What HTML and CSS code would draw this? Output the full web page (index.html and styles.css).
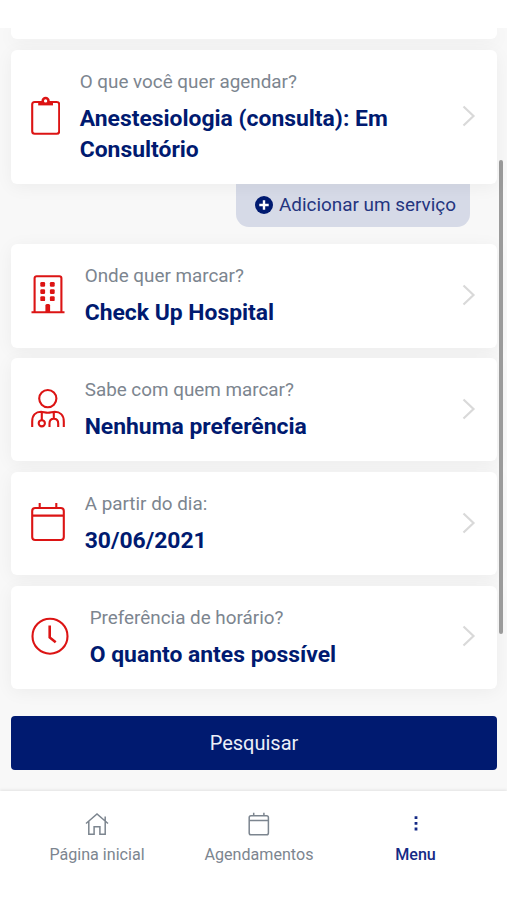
FILE: index.html
```html
<!DOCTYPE html>
<html lang="pt-BR">
<head>
<meta charset="utf-8">
<meta name="viewport" content="width=device-width, initial-scale=1">
<title>Agendamento</title>
<link rel="stylesheet" href="styles.css">
</head>
<body>
<div class="app">
  <main class="content">
    <div class="card card-cut"></div>

    <section class="card card-service">
      <svg class="icon" width="29" height="40" viewBox="0 0 29 40"><rect x="1.200" y="6" width="27" height="31.800" rx="2.500"/><path class="fill" d="M7.200 5.200H22v4.200H7.200z"/><circle class="clip" cx="14.600" cy="4.900" r="2.900"/></svg>
      <div class="text">
        <p class="label">O que você quer agendar?</p>
        <h2 class="value">Anestesiologia (consulta): Em Consultório</h2>
      </div>
      <svg class="chevron" width="14" height="22" viewBox="0 0 14 22"><path d="M1.500 1.500 11.500 11l-10 9.500"/></svg>
    </section>

    <div class="add-service">
      <svg width="18" height="18" viewBox="0 0 18 18"><circle cx="9" cy="9" r="9"/><path d="M9 4.300v9.400M4.300 9h9.400"/></svg>
      <span>Adicionar um serviço</span>
    </div>

    <section class="card">
      <svg class="icon" width="34" height="40" viewBox="0 0 34 40"><path d="M3.600 38V4.200a2 2 0 0 1 2-2h22.800a2 2 0 0 1 2 2V38M.5 38.300h33"/><g class="fill"><rect x="9.300" y="8" width="4.800" height="4.800" rx="1.200"/><rect x="18.900" y="8" width="4.800" height="4.800" rx="1.200"/><rect x="9.300" y="15.200" width="4.800" height="4.800" rx="1.200"/><rect x="18.900" y="15.200" width="4.800" height="4.800" rx="1.200"/><rect x="9.300" y="22.300" width="4.800" height="4.800" rx="1.200"/><rect x="18.900" y="22.300" width="4.800" height="4.800" rx="1.200"/><path d="M14.400 38v-6.500a1.500 1.500 0 0 1 1.500-1.500h1.700a1.500 1.500 0 0 1 1.500 1.500V38z"/></g></svg>
      <div class="text">
        <p class="label">Onde quer marcar?</p>
        <h2 class="value">Check Up Hospital</h2>
      </div>
      <svg class="chevron" width="14" height="22" viewBox="0 0 14 22"><path d="M1.500 1.500 11.500 11l-10 9.500"/></svg>
    </section>

    <section class="card">
      <svg class="icon" width="34" height="40" viewBox="0 0 34 40"><circle cx="16.800" cy="10.600" r="8.600"/><path d="M1.200 39v-5.500C1.200 27 5 23.800 10 23.800c2.500 0 4 1 6.800 1s4.500-1 7-1c5 0 9 3.200 9 9.700V39M10.800 24v8M22.800 24v6.500M18.500 39v-3.500c0-3 1.800-4.700 4.300-4.700s4.400 1.700 4.400 4.700V39"/><circle cx="10.800" cy="35.300" r="3.100"/></svg>
      <div class="text">
        <p class="label">Sabe com quem marcar?</p>
        <h2 class="value">Nenhuma preferência</h2>
      </div>
      <svg class="chevron" width="14" height="22" viewBox="0 0 14 22"><path d="M1.500 1.500 11.500 11l-10 9.500"/></svg>
    </section>

    <section class="card">
      <svg class="icon" width="34" height="40" viewBox="0 0 34 40"><rect x="1.200" y="6" width="31.600" height="32" rx="3"/><path d="M1.200 13.600h31.600M8.700 1v5M25.300 1v5"/></svg>
      <div class="text">
        <p class="label">A partir do dia:</p>
        <h2 class="value">30/06/2021</h2>
      </div>
      <svg class="chevron" width="14" height="22" viewBox="0 0 14 22"><path d="M1.500 1.500 11.500 11l-10 9.500"/></svg>
    </section>

    <section class="card">
      <svg class="icon" width="39" height="40" viewBox="0 0 39 40"><circle cx="19" cy="20.200" r="17.500"/><path d="M18.700 9.400v12l6 4.800" stroke-width="2.600"/></svg>
      <div class="text">
        <p class="label">Preferência de horário?</p>
        <h2 class="value">O quanto antes possível</h2>
      </div>
      <svg class="chevron" width="14" height="22" viewBox="0 0 14 22"><path d="M1.500 1.500 11.500 11l-10 9.500"/></svg>
    </section>

    <button class="search">Pesquisar</button>
    <div class="scrollbar"></div>
  </main>

  <nav class="tabs">
    <a class="tab tab-home">
      <svg width="24" height="24" viewBox="0 0 24 24"><path d="M1 11.500 12 2l11 9.500M3.800 9.500v12.700h5.300v-7.400h5.800v7.400h5.300V9.500M20.200 8.800V4.500"/></svg>
      <span>Página inicial</span>
    </a>
    <a class="tab tab-cal">
      <svg width="24" height="24" viewBox="0 0 24 24"><rect x="2.200" y="3.700" width="19.200" height="19" rx="1.800"/><path d="M2.200 8.400h19.200M6.700.8v2.900M16.900.8v2.900"/></svg>
      <span>Agendamentos</span>
    </a>
    <a class="tab tab-menu active">
      <svg width="24" height="24" viewBox="0 0 24 24"><path class="dots" d="M10.600 4.300h2.800v2.800h-2.800zM10.600 9.900h2.800v2.800h-2.800zM10.600 15.600h2.800v2.800h-2.800z"/></svg>
      <span>Menu</span>
    </a>
  </nav>
</div>
</body>
</html>
```

FILE: styles.css
```css
* { box-sizing: border-box; }
body {
  margin: 0;
  background: #fff;
  font-family: Roboto, "Liberation Sans", sans-serif;
}
.app {
  height: 900px;
  padding-top: 28px;
  display: flex;
  flex-direction: column;
  overflow: hidden;
}
.content {
  position: relative;
  height: 763px;
  padding: 0 10px 0 11px;
  background: #f8f8f8;
  display: flex;
  flex-direction: column;
  overflow: hidden;
}
.card {
  position: relative;
  flex: none;
  height: 103.5px;
  margin-bottom: 10.400px;
  padding: 0 21px 0 20px;
  display: flex;
  align-items: center;
  background: #fff;
  border-radius: 6px;
  box-shadow: 0 3px 18px rgba(0, 0, 0, .05);
}
.card-cut {
  height: 11px;
  margin-bottom: 11px;
  border-radius: 0 0 6px 6px;
}
.card-service {
  height: 134px;
  margin-bottom: 0;
  z-index: 1;
}
.icon {
  flex: none;
  margin: 0 19.700px 3px 0;
  fill: none;
  stroke: #dc1414;
  stroke-width: 2.100;
}
.icon .fill { fill: #dc1414; stroke: none; }
.icon .clip { fill: #fff; stroke-width: 2.500; }
.text { flex: 1; }
.label {
  margin: 0 0 8px;
  font-size: 18.850px;
  line-height: 26px;
  color: #7c858f;
}
.value {
  margin: 0;
  font-size: 22.900px;
  line-height: 31px;
  font-weight: 700;
  color: #001a70;
}
.chevron {
  flex: none;
  margin-bottom: 2px;
  fill: none;
  stroke: #d9d9d9;
  stroke-width: 2.200;
}
.add-service {
  flex: none;
  align-self: flex-end;
  width: 234px;
  height: 43px;
  margin: 0 27px 17px 0;
  padding: 0 0 2px 19px;
  display: flex;
  align-items: center;
  gap: 6px;
  background: #d6dae7;
  border-radius: 0 0 13px 13px;
  color: #24357f;
  font-size: 18.900px;
  white-space: nowrap;
}
.add-service circle { fill: #001a70; }
.add-service path { stroke: #fff; stroke-width: 2.400; }
.search {
  flex: none;
  height: 54px;
  margin-top: 16px;
  border: 0;
  border-radius: 4px;
  background: #001a70;
  color: #eceff8;
  font: 400 20px Roboto, "Liberation Sans", sans-serif;
}
.scrollbar {
  position: absolute;
  right: 4px;
  top: 132px;
  width: 4px;
  height: 474px;
  border-radius: 2px;
  background: #9b9b9b;
}
.tabs {
  position: relative;
  flex: 1;
  padding: 20.500px 0 0 16.500px;
  display: flex;
  background: #fff;
  box-shadow: 0 -1px 3px rgba(0, 0, 0, .09);
}
.tab {
  display: flex;
  flex-direction: column;
  align-items: center;
  gap: 9px;
  font-size: 16.100px;
  line-height: 20px;
  color: #7c858f;
}
.tab-home { width: 161px; }
.tab-cal { width: 163px; }
.tab-menu { width: 150px; }
.tab svg { fill: none; stroke: currentColor; stroke-width: 1.500; }
.tab .dots { fill: currentColor; stroke: none; }
.tab.active { color: #152a85; font-weight: 500; }
```
